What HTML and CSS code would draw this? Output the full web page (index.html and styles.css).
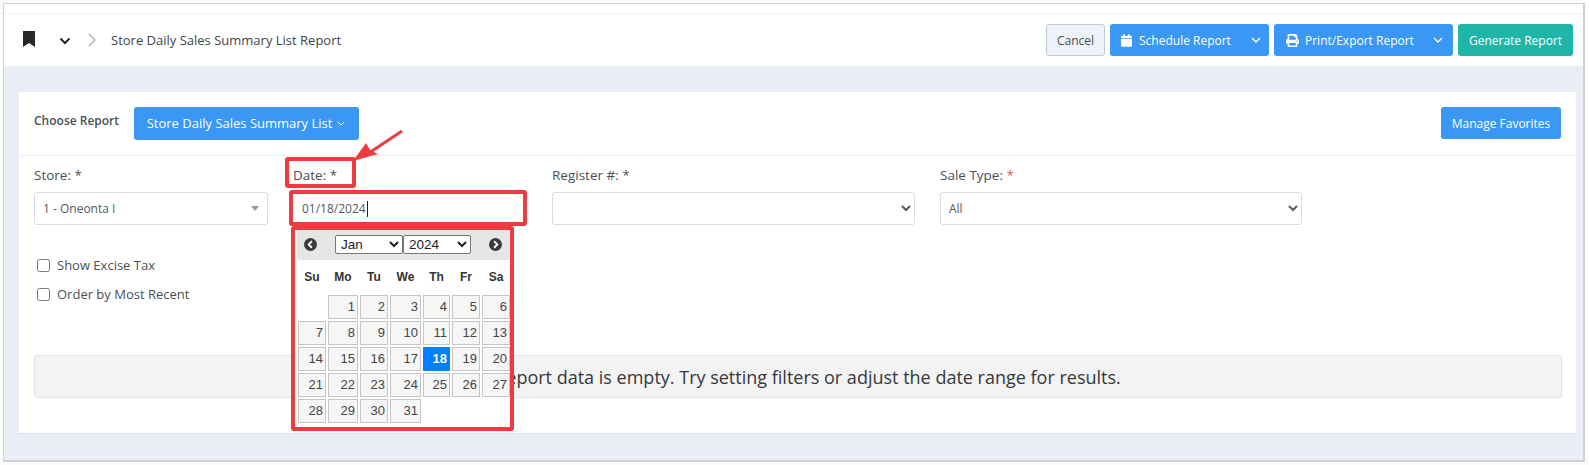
FILE: index.html
```html
<!DOCTYPE html>
<html lang="en">
<head>
<meta charset="utf-8">
<title>Store Daily Sales Summary List Report</title>
<link rel="stylesheet" href="styles.css">
</head>
<body>
<div class="frame">
  <header class="topbar">
    <div class="crumbs">
      <svg class="bookmark" viewBox="0 0 14 16"><path d="M1 0h12v16l-6-4-6 4z"/></svg>
      <svg class="down" viewBox="0 0 12 8"><path d="M1.5 1.5 6 6l4.5-4.5"/></svg>
      <svg class="next" viewBox="0 0 8 14"><path d="M1 1l6 6-6 6"/></svg>
      <span class="title">Store Daily Sales Summary List Report</span>
    </div>
    <div class="actions">
      <button class="btn btn-light">Cancel</button>
      <button class="btn btn-blue btn-split btn-sched">
        <svg class="ico" viewBox="0 0 448 512"><path d="M12 192h424c6.6 0 12 5.4 12 12v260c0 26.5-21.500 48-48 48H48c-26.500 0-48-21.500-48-48V204c0-6.600 5.400-12 12-12zm436-44v-36c0-26.500-21.500-48-48-48h-48V12c0-6.600-5.400-12-12-12h-40c-6.600 0-12 5.400-12 12v52H160V12c0-6.600-5.400-12-12-12h-40c-6.600 0-12 5.400-12 12v52H48C21.500 64 0 85.500 0 112v36c0 6.600 5.400 12 12 12h424c6.600 0 12-5.400 12-12z"/></svg>
        <span class="btn-label">Schedule Report</span>
        <svg class="caret" viewBox="0 0 12 8"><path d="M2 2l4 4 4-4"/></svg>
      </button>
      <button class="btn btn-blue btn-split btn-print">
        <svg class="ico ico-print" viewBox="0 0 512 512"><path d="M448 192V77.250c0-8.490-3.370-16.620-9.370-22.630L393.370 9.370c-6-6-14.140-9.370-22.630-9.370H96C78.330 0 64 14.330 64 32v160c-35.350 0-64 28.650-64 64v112c0 8.840 7.160 16 16 16h48v96c0 17.670 14.330 32 32 32h320c17.670 0 32-14.330 32-32v-96h48c8.840 0 16-7.160 16-16V256c0-35.350-28.650-64-64-64zm-64 256H128v-96h256v96zm0-224H128V64h192v48c0 8.840 7.160 16 16 16h48v96zm48 72c-13.250 0-24-10.750-24-24 0-13.260 10.750-24 24-24s24 10.740 24 24c0 13.250-10.750 24-24 24z"/></svg>
        <span class="btn-label">Print/Export Report</span>
        <svg class="caret" viewBox="0 0 12 8"><path d="M2 2l4 4 4-4"/></svg>
      </button>
      <button class="btn btn-teal">Generate Report</button>
    </div>
  </header>

  <main class="content">
    <section class="card">
      <div class="card-head">
        <div class="chooser">
          <span class="choose-label">Choose Report</span>
          <button class="btn btn-blue btn-report">Store Daily Sales Summary List
            <svg class="caret caret-sm" viewBox="0 0 12 8"><path d="M2 2l4 4 4-4"/></svg>
          </button>
        </div>
        <button class="btn btn-blue btn-fav">Manage Favorites</button>
      </div>
      <div class="card-body">
        <div class="fields">
          <div class="field field-store">
            <label class="lbl">Store: *</label>
            <div class="fake-select"><span>1 - Oneonta I</span><i class="tri"></i></div>
          </div>
          <div class="field field-date">
            <label class="lbl">Date: *</label>
            <div class="date-input"><span>01/18/2024</span><i class="text-caret"></i></div>
          </div>
          <div class="field field-reg">
            <label class="lbl">Register #: *</label>
            <select class="native"><option></option></select>
          </div>
          <div class="field field-sale">
            <label class="lbl">Sale Type: <em class="req">*</em></label>
            <select class="native"><option>All</option></select>
          </div>
        </div>
        <div class="checks">
          <label class="check"><input type="checkbox"><span>Show Excise Tax</span></label>
          <label class="check"><input type="checkbox"><span>Order by Most Recent</span></label>
        </div>
        <div class="alert">Report data is empty. Try setting filters or adjust the date range for results.</div>
      </div>
    </section>
  </main>
</div>

<div class="datepicker">
  <div class="dp-head">
    <svg class="dp-nav" viewBox="0 0 14 14"><circle cx="7" cy="7" r="7"/><path d="M8.500 3.500 5 7l3.500 3.500"/></svg>
    <div class="dp-selects">
      <select class="dp-sel"><option>Jan</option></select>
      <select class="dp-sel"><option>2024</option></select>
    </div>
    <svg class="dp-nav" viewBox="0 0 14 14"><circle cx="7" cy="7" r="7"/><path d="M5.500 3.500 9 7l-3.500 3.500"/></svg>
  </div>
  <div class="dp-grid">
    <b class="dow">Su</b><b class="dow">Mo</b><b class="dow">Tu</b><b class="dow">We</b><b class="dow">Th</b><b class="dow">Fr</b><b class="dow">Sa</b>
    <span class="blank"></span><a class="day">1</a><a class="day">2</a><a class="day">3</a><a class="day">4</a><a class="day">5</a><a class="day">6</a>
    <a class="day">7</a><a class="day">8</a><a class="day">9</a><a class="day">10</a><a class="day">11</a><a class="day">12</a><a class="day">13</a>
    <a class="day">14</a><a class="day">15</a><a class="day">16</a><a class="day">17</a><a class="day active">18</a><a class="day">19</a><a class="day">20</a>
    <a class="day">21</a><a class="day">22</a><a class="day">23</a><a class="day">24</a><a class="day">25</a><a class="day">26</a><a class="day">27</a>
    <a class="day">28</a><a class="day">29</a><a class="day">30</a><a class="day">31</a>
  </div>
</div>

<div class="mark mark-label"></div>
<div class="mark mark-input"></div>
<div class="mark mark-cal"></div>
<svg class="arrow" viewBox="0 0 60 40"><path class="arrow-line" d="M50 3 14 27"/><path class="arrow-head" d="M1 33 14 15l4 7 8 4z"/></svg>
</body>
</html>
```

FILE: styles.css
```css
* { box-sizing: border-box; }
html, body { margin: 0; padding: 0; }
body {
  width: 1589px;
  height: 465px;
  overflow: hidden;
  background: #fbfbfc;
  color: #3d4248;
  font-family: "Open Sans", "Noto Sans", sans-serif;
  font-size: 13px;
  position: relative;
}
.frame {
  margin: 3px 4px 0 3px;
  height: 459px;
  border: 1px solid #cfd1d4;
  border-width: 1px 2px 2px 1px;
  background: #eaedf6;
  display: flex;
  flex-direction: column;
}
.topbar {
  height: 62px;
  flex: none;
  background: #fff;
  padding: 10px 10px 0 18px;
  display: flex;
  align-items: center;
  justify-content: space-between;
  position: relative;
  background-image: linear-gradient(#f0f1f3, #f0f1f3);
  background-size: 100% 1px;
  background-position: 0 9px;
  background-repeat: no-repeat;
}
.crumbs { display: flex; align-items: center; }
.bookmark { width: 14px; height: 16px; fill: #26282b; margin-bottom: 2px; }
.down { width: 12px; height: 8px; margin: 2px 0 0 23px; fill: none; stroke: #26282b; stroke-width: 2; }
.next { width: 8px; height: 14px; margin-left: 17px; fill: none; stroke: #a8abb0; stroke-width: 1.400; }
.title { margin-left: 15px; font-size: 13px; color: #3f4449; }
.actions { display: flex; gap: 5px; }
.btn {
  border: 1px solid transparent;
  border-radius: 3px;
  height: 32px;
  font-family: inherit;
  font-size: 12px;
  display: inline-flex;
  align-items: center;
  justify-content: center;
  padding: 0;
  color: #fff;
}
.btn-light { width: 59px; background: #edf2f8; border-color: #c2cad3; color: #4a4f55; }
.btn-blue { background: #3a97f4; }
.btn-teal { width: 115px; background: #1fb6a9; }
.btn-split { justify-content: flex-start; }
.btn-sched { width: 159px; padding-left: 10px; }
.btn-print { width: 179px; padding-left: 11px; }
.ico { width: 11px; height: 13px; fill: #fff; flex: none; }
.ico-print { width: 13px; }
.btn-label { margin-left: 7px; flex: 1; text-align: left; }
.btn-print .btn-label { margin-left: 6px; }
.caret { width: 12px; height: 8px; fill: none; stroke: #fff; stroke-width: 1.300; margin-right: 6px; flex: none; }
.btn-print .caret { margin-right: 8px; }
.content { flex: 1; padding: 26px 7px 26px 15px; min-height: 0; }
.card {
  height: 342px;
  background: #fff;
  border-bottom: 1px solid #dfe1e5;
  display: flex;
  flex-direction: column;
}
.card-head {
  height: 64px;
  flex: none;
  padding: 15px;
  display: flex;
  justify-content: space-between;
  border-bottom: 1px solid #eceef1;
}
.chooser { display: flex; gap: 15px; }
.choose-label { font-weight: 600; font-size: 12px; line-height: 27px; color: #4a4f55; }
.btn-report { width: 225px; height: 33px; font-size: 13px; padding-bottom: 1px; }
.caret-sm { width: 10px; height: 7px; margin: 1px 0 0 4px; stroke-width: 1.200; }
.btn-fav { width: 120px; height: 32px; }
.card-body { padding: 10px 15px 0 15px; }
.fields { display: grid; grid-template-columns: 259px 259px 388px 362px; }
.lbl { display: block; font-size: 13.500px; font-weight: 500; line-height: 18px; margin-bottom: 8px; color: #4a4f55; }
.req { color: #d9534f; font-style: normal; }
.fake-select, .date-input, .native {
  height: 33px;
  border: 1px solid #d9dce0;
  border-radius: 3px;
  background: #fff;
  font-family: inherit;
  font-size: 12px;
  color: #555a60;
}
.fake-select { width: 234px; display: flex; align-items: center; justify-content: space-between; padding: 0 8px; }
.tri { width: 0; height: 0; border: 4px solid transparent; border-top: 5px solid #999; border-bottom: 0; }
.date-input { width: 230px; display: flex; align-items: center; padding-left: 8px; border-color: #fff; }
.text-caret { width: 1px; height: 16px; background: #222; margin-left: 1px; }
.native { width: 100%; padding: 0 2px 0 4px; }
.field-reg .native { width: 363px; }
.checks { margin-top: 30px; display: flex; flex-direction: column; gap: 9px; }
.check { display: flex; align-items: center; height: 20px; font-size: 13px; color: #4a4f55; }
.check input { width: 13px; height: 13px; margin: 0 7px 0 3px; }
.alert {
  margin-top: 51px;
  height: 43px;
  width: 1528px;
  padding-left: 20px;
  border: 1px solid #e4e4e4;
  background: #f3f3f3;
  border-radius: 2px;
  display: flex;
  align-items: center;
  justify-content: center;
  font-size: 18px;
  color: #33383d;
}
.datepicker {
  position: absolute;
  left: 292px;
  top: 227px;
  width: 220px;
  height: 203px;
  padding: 3px 1px 0 5px;
  background: #fff;
  font-family: "Liberation Sans", Arial, sans-serif;
}
.dp-head {
  height: 30px;
  width: 214px;
  background: #e6e6e6;
  border-radius: 3px;
  display: flex;
  align-items: center;
  justify-content: space-between;
  padding: 0 9px 2px 7px;
}
.dp-nav { width: 13px; height: 13px; fill: #3b3b3b; }
.dp-nav path { fill: none; stroke: #fff; stroke-width: 2; }
.dp-selects { display: flex; }
.dp-sel {
  width: 68px;
  height: 19px;
  font-family: "Liberation Sans", Arial, sans-serif;
  font-size: 13.500px;
  padding: 0 0 0 1px;
  border: 1px solid #767676;
  border-radius: 2px;
  background: #fff;
  color: #222;
}
.dp-grid {
  margin: 10px 0 0 1px;
  display: grid;
  grid-template-columns: 28px 30px 28px 31px 27px 28px 28px;
  grid-template-rows: 23px repeat(5, 24px);
  gap: 2px;
}
.dow { font-size: 12px; font-weight: 700; color: #333; text-align: center; line-height: 14px; }
.day {
  border: 1px solid #c5c5c5;
  background: #f6f6f6;
  color: #454545;
  font-size: 13px;
  line-height: 22px;
  text-align: right;
  padding-right: 2px;
}
.day.active { background: #007fff; border-color: #007fff; color: #fff; font-weight: 700; }
.mark { position: absolute; border: 4px solid #ee3b40; border-radius: 3px; }
.mark-label { left: 285px; top: 157px; width: 71px; height: 31px; }
.mark-input { left: 289px; top: 190px; width: 238px; height: 36px; }
.mark-cal { left: 291px; top: 226px; width: 223px; height: 205px; }
.arrow { position: absolute; left: 352px; top: 128px; width: 60px; height: 40px; }
.arrow-line { fill: none; stroke: #ee3b40; stroke-width: 3; }
.arrow-head { fill: #ee3b40; }
```
